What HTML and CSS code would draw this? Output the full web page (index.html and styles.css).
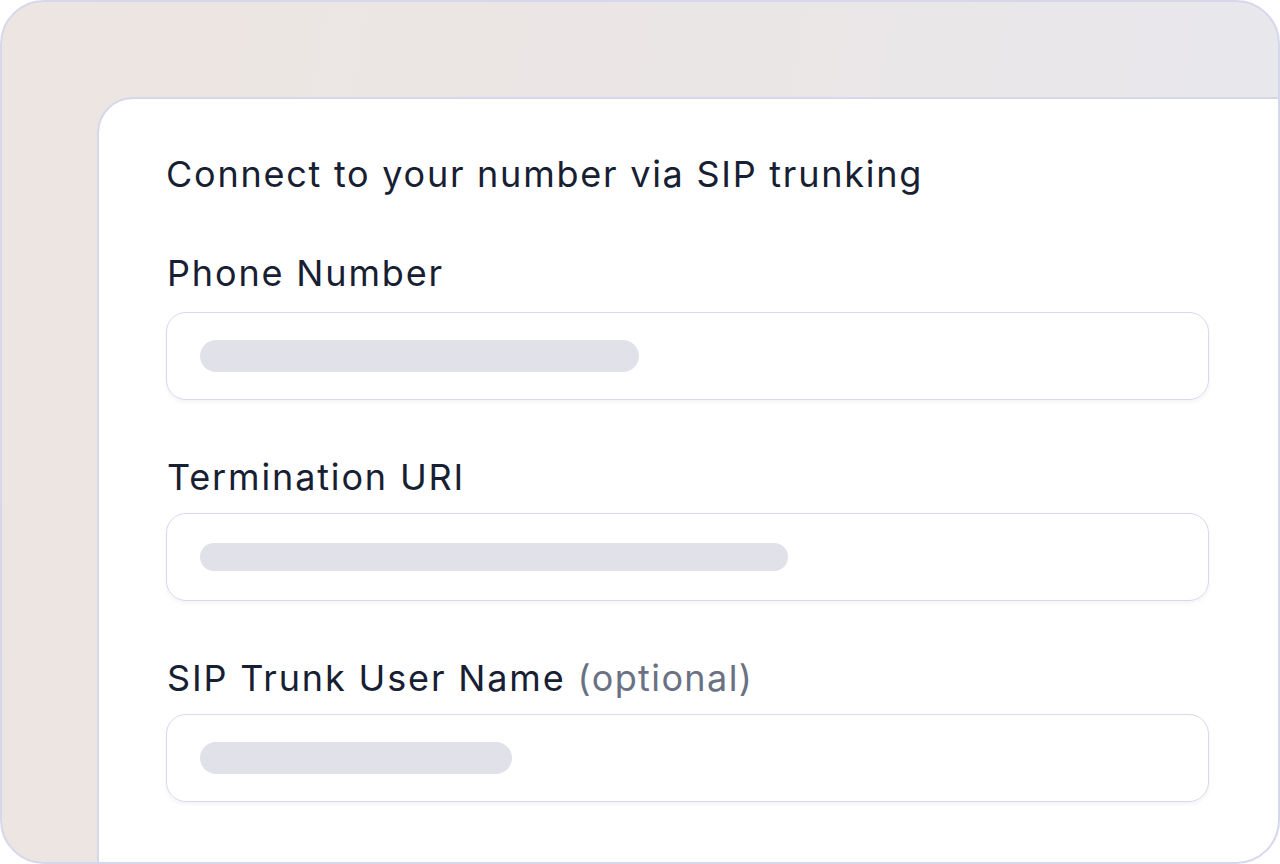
FILE: index.html
```html
<!DOCTYPE html>
<html>

	<head>
		<meta charset="UTF-8">
		<title>SIP trunking</title>
		<link rel="stylesheet" href="styles.css">
	</head>

	<body>
		<div id="frame">
			<div class="panel">
				<h1 class="title">Connect to your number via SIP trunking</h1>
				<div class="field">
					<label>Phone Number</label>
					<div class="input">
						<span class="bar" style="width: 439px"></span>
					</div>
				</div>
				<div class="field">
					<label>Termination URI</label>
					<div class="input">
						<span class="bar thin" style="width: 588px"></span>
					</div>
				</div>
				<div class="field">
					<label>SIP Trunk User Name <em>(optional)</em></label>
					<div class="input">
						<span class="bar" style="width: 312px"></span>
					</div>
				</div>
			</div>
		</div>
	</body>

</html>
```

FILE: styles.css
```css
html, body {
	margin: 0;
	padding: 0;
	background: #fff;
}

body {
	font-family: Inter, "Noto Sans", sans-serif;
	color: #172033;
}

#frame {
	width: 1280px;
	height: 864px;
	box-sizing: border-box;
	border: 2px solid #d7d7ec;
	border-radius: 44px;
	overflow: hidden;
	padding: 95px 0 0 95px;
	background: linear-gradient(100deg, #ece5e1 0%, #eae6e6 55%, #e8e8ee 100%);
}

#frame .panel {
	height: 100%;
	box-sizing: border-box;
	background: #fff;
	border-top: 2px solid #d7d7ec;
	border-left: 2px solid #d7d7ec;
	border-top-left-radius: 36px;
	padding: 53px 69px 0 67px;
	display: flex;
	flex-direction: column;
	gap: 55px;
}

.title {
	margin: 0;
	font-size: 36px;
	font-weight: 400;
	line-height: 44px;
	letter-spacing: 1.75px;
}

.field {
	display: flex;
	flex-direction: column;
	gap: 17px;
}

.field + .field {
	margin-top: -3px;
	gap: 14px;
}

.field + .field label {
	margin-top: 3px;
}

.field label {
	font-size: 36px;
	line-height: 44px;
	letter-spacing: 1.85px;
	padding-left: 1px;
}

.field label em {
	font-style: normal;
	letter-spacing: 1.4px;
	color: #6a7183;
}

.input {
	height: 88px;
	box-sizing: border-box;
	border: 1.5px solid #d8d8ee;
	border-radius: 20px;
	box-shadow: 0 2px 4px rgba(40, 40, 90, 0.06);
	padding-left: 33px;
	display: flex;
	align-items: center;
}

.input .bar {
	display: block;
	height: 32px;
	border-radius: 16px;
	background: #e1e1ea;
}

.input .bar.thin {
	height: 28px;
	border-radius: 14px;
}
```
